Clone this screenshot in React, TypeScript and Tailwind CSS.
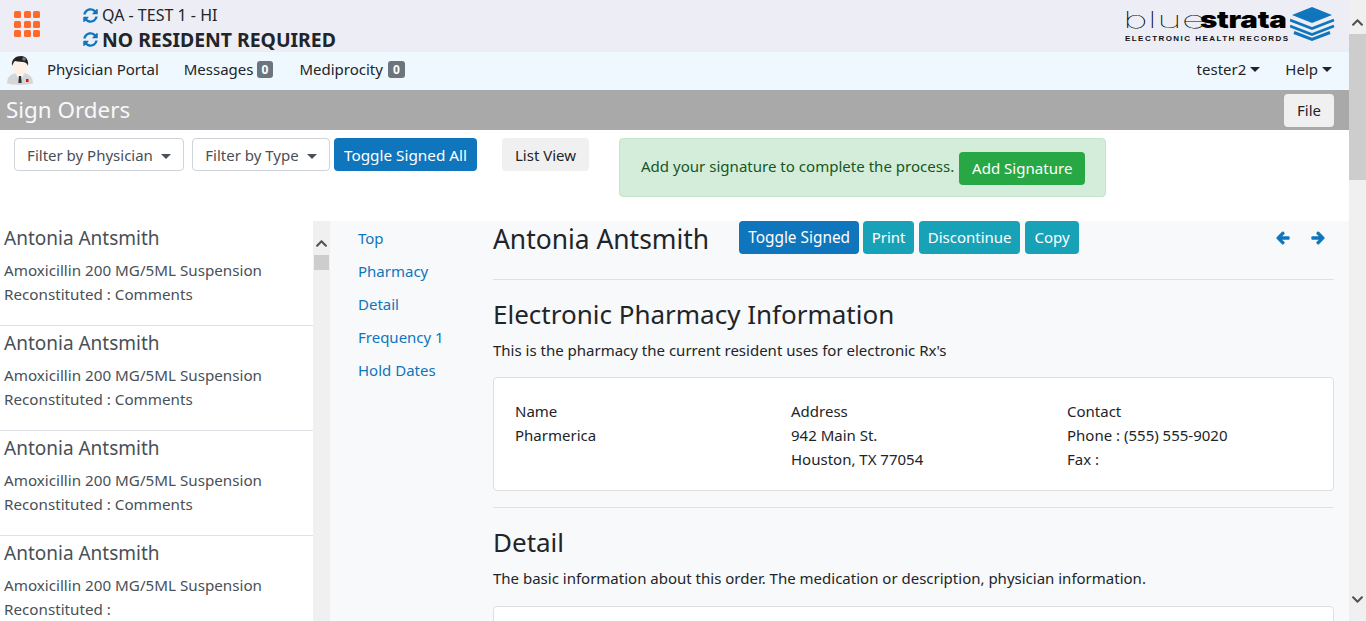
import React from "react";
import { FaSyncAlt, FaArrowLeft, FaArrowRight, FaChevronUp, FaChevronDown } from "react-icons/fa";

const font = "font-['Noto_Sans','Open_Sans',sans-serif]";

const orders = [
  { detail: "Reconstituted : Comments" },
  { detail: "Reconstituted : Comments" },
  { detail: "Reconstituted : Comments" },
  { detail: "Reconstituted :" },
];

const sections = ["Top", "Pharmacy", "Detail", "Frequency 1", "Hold Dates"];

const Caret = ({ gap = "ml-[4px]" }: { gap?: string }) => (
  <span className={`${gap} inline-block h-0 w-0 border-x-[5px] border-t-[5px] border-x-transparent border-t-current align-middle`} />
);

const Logo = () => (
  <div className="flex items-start">
    <div className="flex w-[165px] flex-col">
      <div className="flex h-[24px] items-center whitespace-nowrap text-[23px] leading-[24px] text-black">
        <span className="ml-[-2px] w-[77px] origin-left scale-x-[1.85] font-['Inter'] font-thin">blue</span>
        <span className="origin-left scale-x-[1.28] font-['Inter'] font-black tracking-[-0.2px]">strata</span>
      </div>
      <div className="mt-[2px] whitespace-nowrap font-['Liberation_Sans'] text-[8px] font-bold leading-[10px] tracking-[1.45px] text-[#111]">
        ELECTRONIC HEALTH RECORDS
      </div>
    </div>
    <svg width="46" height="35" viewBox="0 0 46 35" className="mt-[-1px]">
      <polygon points="22,0 42,8 22,16 2,8" fill="#0f75bc" />
      <path d="M0 13 L22 21.5 L44 13 M0 19 L22 27.5 L44 19" fill="none" stroke="#0f75bc" strokeWidth="2.6" />
      <path d="M4 25.5 L22 32.5 L40 25.5" fill="none" stroke="#0f75bc" strokeWidth="3" />
    </svg>
  </div>
);

const DoctorIcon = () => (
  <svg width="28" height="30" viewBox="0 0 28 30">
    <path d="M1 27 C1 21 5 18 10 17 L18 17 C23 18 27 21 27 27 C24 29.5 4 29.5 1 27 Z" fill="#d4d6d8" />
    <path d="M10 17 L14 27 L18 17 Z" fill="#fff" />
    <path d="M12.8 20 H15.2 L15.6 27 H12.4 Z" fill="#333" />
    <rect x="20" y="23" width="2.5" height="3" fill="#d11" />
    <ellipse cx="14" cy="11" rx="7.5" ry="8.5" fill="#fff0e6" />
    <path d="M6 10 C5 3 10 0 15 0 C20 0 23 4 22 10 C21 7 19 6 17 6 C13 6 10 5 9 5 C7.5 6 7 8 6 10 Z" fill="#222" />
    <circle cx="18" cy="3" r="1.8" fill="#777" />
  </svg>
);

const AppsIcon = () => (
  <div className="grid w-[26px] grid-cols-3 gap-[2.5px]">
    {Array.from({ length: 9 }).map((_, i) => (
      <span key={i} className="h-[7px] w-[7px] rounded-[1.5px] bg-[#ff6a2b]" />
    ))}
  </div>
);

const App = () => {
  return (
    <div className={`${font} flex h-[621px] w-[1366px] overflow-hidden bg-white text-[15px] text-[#212529]`}>
      <div className="flex w-[1349px] shrink-0 flex-col">
        {/* top band */}
        <div className="flex h-[52px] shrink-0 bg-[#ededf5]">
          <div className="w-[83px] pl-[14px] pt-[11px]">
            <AppsIcon />
          </div>
          <div className="flex flex-col pt-[3px]">
            <div className="flex h-[24px] items-center gap-[4px] text-[16px]">
              <FaSyncAlt className="text-[15px] text-[#0f75bc]" />
              <span>QA - TEST 1 - HI</span>
            </div>
            <div className="flex h-[25px] items-center gap-[4px] text-[19.4px] font-bold">
              <FaSyncAlt className="text-[15px] text-[#0f75bc]" />
              <span>NO RESIDENT REQUIRED</span>
            </div>
          </div>
          <div className="ml-auto pr-[13px] pt-[8px]">
            <Logo />
          </div>
        </div>

        {/* nav */}
        <div className="flex h-[38px] shrink-0 items-center bg-[#f0f8ff] pb-[4px]">
          <div className="mt-[4px] w-[35px] pl-[6px]">
            <DoctorIcon />
          </div>
          <span className="ml-[12px]">Physician Portal</span>
          <span className="ml-[25px] flex items-center gap-[3px]">
            Messages
            <span className="rounded-[3px] bg-[#6c757d] px-[5px] text-[12px] font-bold leading-[17px] text-white">0</span>
          </span>
          <span className="ml-[26px] flex items-center gap-[5px]">
            Mediprocity
            <span className="rounded-[3px] bg-[#6c757d] px-[5px] text-[12px] font-bold leading-[17px] text-white">0</span>
          </span>
          <span className="ml-auto flex items-center">
            tester2
            <Caret />
          </span>
          <span className="ml-[25px] mr-[17px] flex items-center">
            Help
            <Caret />
          </span>
        </div>

        {/* title */}
        <div className="flex h-[40px] shrink-0 items-center justify-between bg-[#a9a9a9] pl-[6px] pr-[15px]">
          <span className="pb-[1px] text-[22.4px] text-[#f8f9fa]">Sign Orders</span>
          <button className="h-[33px] w-[50px] rounded-[4px] bg-[#f0f0f0]">File</button>
        </div>

        {/* toolbar */}
        <div className="flex h-[91px] shrink-0 items-start pl-[14px] pt-[8px]">
          <button className="h-[33px] w-[170px] rounded-[4px] border border-[#ced4da] bg-white pt-[1px] text-[#495057]">
            Filter by Physician
            <Caret gap="ml-[8px]" />
          </button>
          <button className="ml-[8px] h-[33px] w-[138px] rounded-[4px] border border-[#ced4da] bg-white pt-[1px] text-[#495057]">
            Filter by Type
            <Caret gap="ml-[8px]" />
          </button>
          <button className="ml-[4px] h-[33px] w-[143px] rounded-[4px] bg-[#0f75bc] pt-[1px] text-[15.3px] text-white">Toggle Signed All</button>
          <button className="ml-[25px] h-[33px] w-[87px] rounded-[4px] bg-[#f0f0f0] pt-[1px]">List View</button>
          <div className="ml-[30px] flex h-[59px] w-[487px] items-center rounded-[4px] border border-[#c3e6cb] bg-[#d4edda] pl-[21px] text-[15.05px] text-[#155724]">
            <span className="pb-[2px]">Add your signature to complete the process.</span>
            <button className="ml-[5px] mt-[2px] h-[33px] w-[126px] rounded-[4px] bg-[#28a745] text-white">Add Signature</button>
          </div>
        </div>

        {/* body */}
        <div className="flex min-h-0 flex-1">
          {/* order list */}
          <div className="w-[313px] shrink-0 overflow-hidden text-[#495057]">
            {orders.map((order, i) => (
              <div key={i} className="h-[105px] border-b border-[#dee2e6] pl-[4px] pt-[3px]">
                <div className="text-[19px] leading-[28px]">Antonia Antsmith</div>
                <div className="mt-[6px] text-[15.2px] leading-[24px]">Amoxicillin 200 MG/5ML Suspension</div>
                <div className="text-[15.2px] leading-[24px]">{order.detail}</div>
              </div>
            ))}
          </div>

          {/* list scrollbar */}
          <div className="flex w-[17px] shrink-0 flex-col items-center bg-[#f0f0f0] pt-[16px]">
            <FaChevronUp className="text-[13px] text-[#505050]" />
            <div className="mt-[5px] h-[15px] w-[15px] bg-[#cdcdcd]" />
          </div>

          {/* detail pane */}
          <div className="flex min-w-0 flex-1 bg-[#f8f9fa]">
            <div className="flex w-[163px] shrink-0 flex-col pl-[28px] pt-[1px] text-[#0f75bc]">
              {sections.map((s) => (
                <div key={s} className="h-[33px] leading-[33px]">
                  {s}
                </div>
              ))}
            </div>
            <div className="mr-[15px] min-w-0 flex-1">
              <div className="flex h-[59px] items-start border-b border-[#dee2e6]">
                <h1 className="text-[26.4px] leading-[37px]">Antonia Antsmith</h1>
                <button className="ml-[30px] h-[33px] w-[120px] rounded-[4px] bg-[#0f75bc] text-[15.4px] text-white">Toggle Signed</button>
                <button className="ml-[4px] h-[33px] w-[51px] rounded-[4px] bg-[#17a2b8] text-white">Print</button>
                <button className="ml-[5px] h-[33px] w-[101px] rounded-[4px] bg-[#17a2b8] text-white">Discontinue</button>
                <button className="ml-[5px] h-[33px] w-[54px] rounded-[4px] bg-[#17a2b8] text-white">Copy</button>
                <div className="ml-auto flex h-[33px] items-center gap-[21px] pr-[9px] text-[14px] text-[#0f75bc]">
                  <FaArrowLeft stroke="currentColor" strokeWidth={40} />
                  <FaArrowRight stroke="currentColor" strokeWidth={40} />
                </div>
              </div>

              <h2 className="mt-[15px] text-[26px] leading-[38px]">Electronic Pharmacy Information</h2>
              <p className="mt-[5px] leading-[24px]">This is the pharmacy the current resident uses for electronic Rx's</p>
              <div className="mt-[15px] grid h-[114px] grid-cols-[276px_276px_1fr] rounded-[4px] border border-[#dfdfdf] bg-white pl-[21px] pt-[21px] leading-[24px]">
                <div>
                  <div>Name</div>
                  <div>Pharmerica</div>
                </div>
                <div>
                  <div>Address</div>
                  <div>942 Main St.</div>
                  <div>Houston, TX 77054</div>
                </div>
                <div>
                  <div>Contact</div>
                  <div>Phone : (555) 555-9020</div>
                  <div>Fax :</div>
                </div>
              </div>
              <div className="mt-[16px] border-t border-[#dee2e6]" />

              <h2 className="mt-[15px] text-[26px] leading-[38px]">Detail</h2>
              <p className="mt-[5px] leading-[24px]">The basic information about this order. The medication or description, physician information.</p>
              <div className="mt-[16px] h-[40px] rounded-[4px] border border-[#dfdfdf] bg-white" />
            </div>
          </div>
        </div>
      </div>

      {/* page scrollbar */}
      <div className="relative flex w-[17px] shrink-0 flex-col items-center bg-[#f0f0f0]">
        <FaChevronUp className="mt-[16px] text-[13px] text-[#505050]" />
        <div className="mt-[5px] h-[146px] w-[17px] bg-[#cdcdcd]" />
        <FaChevronDown className="absolute bottom-[15px] text-[13px] text-[#505050]" />
      </div>
    </div>
  );
};

export default App;
